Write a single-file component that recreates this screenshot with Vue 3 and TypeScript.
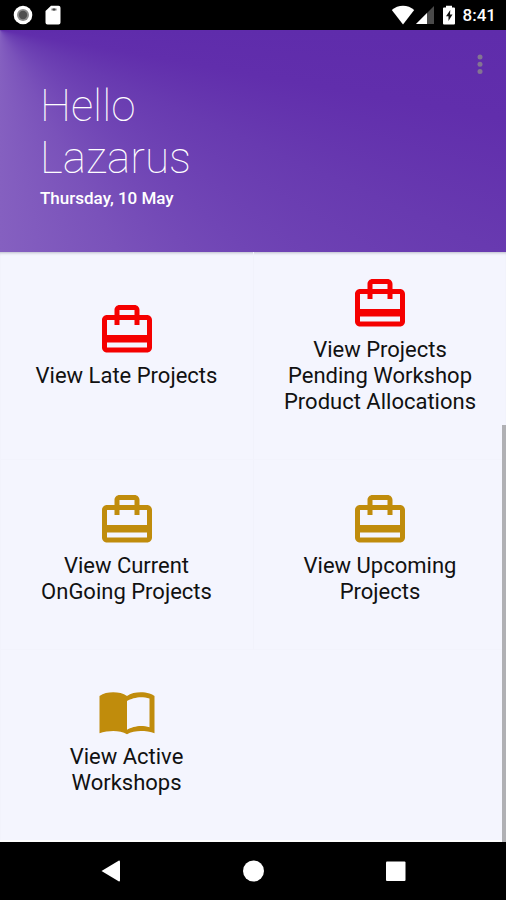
<script setup lang="ts">
interface Tile {
  label: string
  icon: 'bag' | 'book'
  tone: 'late' | 'normal'
}

const tiles: Tile[] = [
  { label: 'View Late Projects', icon: 'bag', tone: 'late' },
  { label: 'View Projects\nPending Workshop\nProduct Allocations', icon: 'bag', tone: 'late' },
  { label: 'View Current\nOnGoing Projects', icon: 'bag', tone: 'normal' },
  { label: 'View Upcoming\nProjects', icon: 'bag', tone: 'normal' },
  { label: 'View Active\nWorkshops', icon: 'book', tone: 'normal' },
]

const iconPaths: Record<Tile['icon'], string> = {
  bag: 'M20 6h-3V4c0-1.11-.89-2-2-2H9c-1.11 0-2 .89-2 2v2H4c-1.11 0-2 .89-2 2v11c0 1.11.89 2 2 2h16c1.11 0 2-.89 2-2V8c0-1.11-.89-2-2-2zM9 4h6v2H9V4zm11 15H4v-2h16v2zm0-5H4V8h3v2h2V8h6v2h2V8h3v6z',
  book: 'M21 5c-1.11-.35-2.33-.5-3.5-.5-1.95 0-4.05.4-5.5 1.5-1.45-1.1-3.55-1.5-5.5-1.5S2.45 4.9 1 6v14.9C2.45 20.35 5.05 20 6.5 20c1.95 0 4.05.3 5.5 1.3 1.35-.85 3.8-1.3 5.5-1.3 1.65 0 4.1.2 5.5.9V6c-.6-.45-1.25-.75-2-1zm0 13.5c-1.1-.35-2.3-.5-3.5-.5-1.7 0-4.15.65-5.5 1.5V8c1.35-.85 3.8-1.5 5.5-1.5 1.2 0 2.4.15 3.5.5v11.5z',
}
</script>

<template>
  <div class="screen">
    <div class="status">
      <svg class="status-icon" viewBox="0 0 20 20" aria-hidden="true">
        <circle cx="10" cy="10" r="9.3" fill="#fff" />
        <circle cx="10" cy="10" r="6" fill="#8c8c8c" />
        <circle cx="10" cy="10" r="4.2" fill="#505050" />
      </svg>
      <svg class="status-icon card" viewBox="0 0 20 20" aria-hidden="true">
        <path d="M8 .8h7.500a2 2 0 0 1 2 2v14.700a2 2 0 0 1-2 2h-11a2 2 0 0 1-2-2V6z" fill="#fff" />
        <path d="M8.500 3.500h5v2h-5z" fill="#777" />
        <path d="M10.200 3.500h1.600v2h-1.600z" fill="#333" />
      </svg>
      <span class="spacer"></span>
      <svg class="wifi" viewBox="0 0 24 20" aria-hidden="true">
        <path d="M12 19.500L.8 5C7-.7 17-.7 23.200 5z" fill="#fff" />
      </svg>
      <svg class="status-icon" viewBox="0 0 20 20" aria-hidden="true">
        <path d="M19 1v18H1z" fill="#4a4a4a" />
        <path d="M12 8v11H1z" fill="#fff" />
      </svg>
      <svg class="battery" viewBox="0 0 14 20" aria-hidden="true">
        <path d="M4 .8h6v1.700h2q1 0 1 1v15q0 1-1 1H2q-1 0-1-1v-15q0-1 1-1h2z" fill="#fff" />
        <path d="M8.300 5L4 11.200H6.500V16L10.500 9.500H8z" fill="#111" />
      </svg>
      <span class="clock">8:41</span>
    </div>

    <header class="hero">
      <div>
        <h1 class="greeting">Hello<br />Lazarus</h1>
        <p class="date">Thursday, 10 May</p>
      </div>
      <button class="more" type="button" aria-label="More options">
        <svg viewBox="0 0 24 24" aria-hidden="true">
          <circle cx="12" cy="5" r="2.500" />
          <circle cx="12" cy="12.300" r="2.500" />
          <circle cx="12" cy="19.600" r="2.500" />
        </svg>
      </button>
    </header>

    <main class="content">
      <div class="grid">
        <button v-for="tile in tiles" :key="tile.label" class="tile" type="button">
          <svg class="tile-icon" :class="tile.tone" viewBox="0 0 24 24" aria-hidden="true">
            <path :d="iconPaths[tile.icon]" />
          </svg>
          <span class="tile-label">{{ tile.label }}</span>
        </button>
      </div>
      <div class="scrollbar"></div>
    </main>

    <nav class="navbar">
      <button type="button" aria-label="Back">
        <svg viewBox="0 0 24 24"><path d="M2.500 12L20 1.500q1 0 1 1v19q0 1-1 1z" /></svg>
      </button>
      <button type="button" aria-label="Home">
        <svg viewBox="0 0 24 24"><circle cx="12.500" cy="12" r="10.500" /></svg>
      </button>
      <button type="button" aria-label="Recent apps">
        <svg viewBox="0 0 24 24"><rect x="3" y="2.500" width="19.500" height="19.500" rx="1" /></svg>
      </button>
    </nav>
  </div>
</template>

<style>
body {
  margin: 0;
  background: #000;
}
</style>

<style scoped>
.screen {
  display: flex;
  flex-direction: column;
  min-height: 100vh;
  font-family: Roboto, 'Liberation Sans', sans-serif;
  background: #f4f5fe;
}

button {
  margin: 0;
  padding: 0;
  border: 0;
  background: none;
  font: inherit;
  color: inherit;
  cursor: pointer;
}

.status {
  display: flex;
  align-items: center;
  height: 30px;
  padding: 0 10px 0 13px;
  background: #000;
  color: #fff;
}

.status-icon {
  width: 20px;
  height: 20px;
}

.card {
  margin-left: 10px;
}

.spacer {
  flex: 1;
}

.wifi {
  width: 24px;
  height: 20px;
}

.battery {
  width: 14px;
  height: 20px;
  margin: 0 7px;
}

.clock {
  font-size: 17px;
  font-weight: 500;
  line-height: 32px;
}

.hero {
  display: flex;
  justify-content: space-between;
  align-items: flex-start;
  padding: 22px 14px 44px 40px;
  background: conic-gradient(from 90deg at 0 0, #5f2cab 0deg, #612eac 10deg, #683ab0 24deg, #7045b5 42deg, #7a52ba 62deg, #8560c0 90deg, #8560c0 360deg);
  color: #fff;
}

.greeting {
  margin: 28px 0 0;
  font-size: 44px;
  font-weight: 100;
  line-height: 52px;
}

.date {
  margin: 4px 0 0;
  font-size: 17px;
  font-weight: 500;
  line-height: 20px;
}

.more {
  display: flex;
}

.more svg {
  width: 24px;
  height: 24px;
  fill: #837592;
}

.content {
  position: relative;
  display: flex;
  flex: 1;
  border-bottom: 2px solid #fff;
  box-shadow: inset 0 3px 3px -2px #b9bac8;
}

.grid {
  display: grid;
  flex: 1;
  grid-template-columns: 1fr 1fr;
  grid-template-rows: 12fr 11fr 11fr;
}

.tile {
  display: flex;
  flex-direction: column;
  align-items: center;
  justify-content: center;
  gap: 3px;
  padding-bottom: 13px;
  color: #111;
}

.tile:nth-child(-n + 2) {
  padding-bottom: 21px;
}

.tile:nth-child(-n + 4) {
  border-bottom: 1px solid #f2f3fc;
}

.tile:nth-child(even) {
  border-left: 1px solid #f1f2fb;
}

.tile-icon {
  width: 60px;
  height: 60px;
}

.late {
  fill: #f50000;
}

.normal {
  fill: #c08c0c;
}

.tile-label {
  font-size: 22px;
  line-height: 26px;
  text-align: center;
  white-space: pre-line;
}

.scrollbar {
  position: absolute;
  right: 0;
  bottom: -2px;
  width: 4px;
  height: 71%;
  background: #b0b0b4;
}

.navbar {
  display: flex;
  height: 58px;
  padding: 0 40px;
  background: #000;
}

.navbar button {
  display: flex;
  flex: 1;
  align-items: center;
  justify-content: center;
}

.navbar svg {
  width: 24px;
  height: 24px;
  fill: #fff;
}
</style>
